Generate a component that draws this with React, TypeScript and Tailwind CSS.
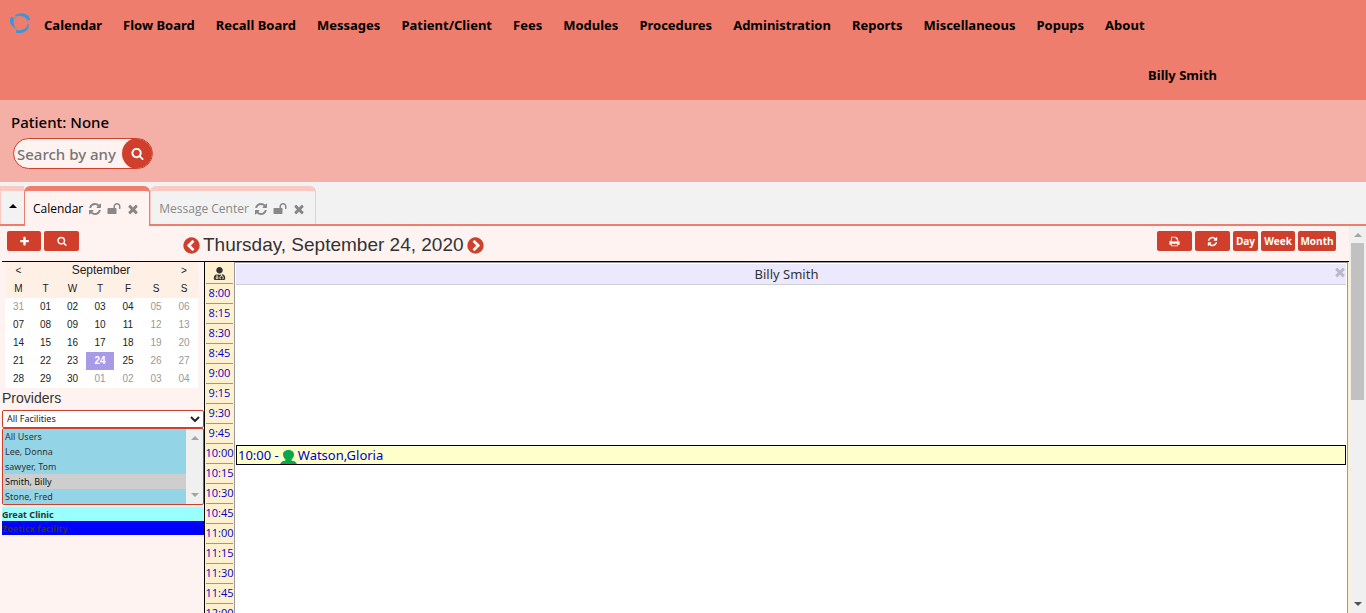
import React from "react";
import { FaUserMd } from "react-icons/fa";

type IconProps = { d: string; className: string };

function Icon({ d, className }: IconProps) {
  return (
    <svg viewBox="0 0 1792 1792" fill="currentColor" aria-hidden="true" className={className}>
      <path d={d} />
    </svg>
  );
}

const REFRESH =
  "M1639 1056q0 5-1 7-64 268-268 434.500t-478 166.500q-146 0-282.500-55t-243.500-157l-129 129q-19 19-45 19t-45-19-19-45v-448q0-26 19-45t45-19h448q26 0 45 19t19 45-19 45l-137 137q71 66 161 102t187 36q134 0 250-65t186-179q11-17 53-117 8-23 30-23h192q13 0 22.500 9.500t9.500 22.500zm25-800v448q0 26-19 45t-45 19h-448q-26 0-45-19t-19-45 19-45l138-138q-148-137-349-137-134 0-250 65t-186 179q-11 17-53 117-8 23-30 23h-199q-13 0-22.500-9.500t-9.500-22.500v-7q65-268 270-434.500t480-166.500q146 0 284 55.500t245 156.500l130-129q19-19 45-19t45 19 19 45z";
const SEARCH =
  "M1216 832q0-185-131.500-316.500t-316.500-131.500-316.500 131.500-131.500 316.500 131.500 316.500 316.500 131.500 316.500-131.500 131.500-316.500zm512 832q0 52-38 90t-90 38q-54 0-90-38l-343-342q-179 124-399 124-143 0-273.500-55.500t-225-150-150-225-55.500-273.500 55.500-273.500 150-225 225-150 273.500-55.500 273.500 55.500 225 150 150 225 55.500 273.500q0 220-124 399l343 343q37 37 37 90z";
const TIMES =
  "M1490 1322q0 40-28 68l-136 136q-28 28-68 28t-68-28l-294-294-294 294q-28 28-68 28t-68-28l-136-136q-28-28-28-68t28-68l294-294-294-294q-28-28-28-68t28-68l136-136q28-28 68-28t68 28l294 294 294-294q28-28 68-28t68 28l136 136q28 28 28 68t-28 68l-294 294 294 294q28 28 28 68z";
const UNLOCK =
  "M1728 576v256q0 26-19 45t-45 19h-64q-26 0-45-19t-19-45v-256q0-106-75-181t-181-75-181 75-75 181v192h96q40 0 68 28t28 68v576q0 40-28 68t-68 28h-960q-40 0-68-28t-28-68v-576q0-40 28-68t68-28h672v-192q0-185 131.500-316.500t316.500-131.500 316.500 131.500 131.500 316.500z";
const CHEVRON_LEFT =
  "M1037 1395l102-102q19-19 19-45t-19-45l-307-307 307-307q19-19 19-45t-19-45l-102-102q-19-19-45-19t-45 19l-454 454q-19 19-19 45t19 45l454 454q19 19 45 19t45-19zm627-499q0 209-103 385.500t-279.500 279.500-385.500 103-385.500-103-279.500-279.500-103-385.500 103-385.500 279.500-279.500 385.500-103 385.500 103 279.500 279.500 103 385.500z";
const PLUS =
  "M1600 736v192q0 40-28 68t-68 28h-416v416q0 40-28 68t-68 28h-192q-40 0-68-28t-28-68v-416h-416q-40 0-68-28t-28-68v-192q0-40 28-68t68-28h416v-416q0-40 28-68t68-28h192q40 0 68 28t28 68v416h416q40 0 68 28t28 68z";
const PRINT =
  "M448 1536h896v-256h-896v256zm0-640h896v-384h-160q-40 0-68-28t-28-68v-160h-640v640zm1152 64q0-26-19-45t-45-19-45 19-19 45 19 45 45 19 45-19 19-45zm128 0v416q0 13-9.500 22.500t-22.500 9.500h-224v160q0 40-28 68t-68 28h-960q-40 0-68-28t-28-68v-160h-224q-13 0-22.500-9.500t-9.500-22.500v-416q0-79 56.500-135.500t135.500-56.500h64v-544q0-40 28-68t68-28h672q40 0 88 20t76 48l152 152q28 28 48 76t20 88v256h64q79 0 135.500 56.500t56.500 135.500z";

const MENU = [
  "Calendar", "Flow Board", "Recall Board", "Messages", "Patient/Client", "Fees", "Modules",
  "Procedures", "Administration", "Reports", "Miscellaneous", "Popups", "About",
];

const WEEKS = [
  ["31", "01", "02", "03", "04", "05", "06"],
  ["07", "08", "09", "10", "11", "12", "13"],
  ["14", "15", "16", "17", "18", "19", "20"],
  ["21", "22", "23", "24", "25", "26", "27"],
  ["28", "29", "30", "01", "02", "03", "04"],
];

const TIMES_OF_DAY = [
  "8:00", "8:15", "8:30", "8:45", "9:00", "9:15", "9:30", "9:45", "10:00",
  "10:15", "10:30", "10:45", "11:00", "11:15", "11:30", "11:45", "12:00",
];

function Logo() {
  return (
    <svg viewBox="0 0 20 20" fill="#3498db" aria-hidden="true" className="size-5">
      <circle cx="10.300" cy="10" r="7.600" fill="none" stroke="#8a93b0" strokeWidth="1" />
      <path d="M4 3.200Q9-1.400 16 1.200Q20 3 20.200 7.400L17.400 6.800Q15.500 3.800 12 3Q8 2.200 4 3.200Z" />
      <path d="M.8 4.400Q4.200 3.400 3.700 5.400Q2.400 10 5.800 15.400Q1 13.200 .1 9Q-.4 6.500 .8 4.400Z" />
      <path d="M6 17Q9 17.800 12 17Q16.500 15.400 18.700 11Q20 15 15.500 18.200Q11 21 6 19.800Z" />
    </svg>
  );
}

function Header() {
  return (
    <header className="shrink-0 bg-[#ee7d6d] font-['Noto_Sans',sans-serif] text-[13px] leading-5 font-bold text-black">
      <nav className="flex h-[50px] items-center pl-2.5">
        <a href="#home" aria-label="Home" className="-mt-1 mr-3.5">
          <Logo />
        </a>
        <div className="flex gap-[21px]">
          {MENU.map((m) => (
            <a key={m} href="#menu" className="whitespace-nowrap">{m}</a>
          ))}
        </div>
      </nav>
      <div className="flex h-[50px] items-center justify-end pr-[149px]">
        <a href="#user">Billy Smith</a>
      </div>
    </header>
  );
}

function PatientBar() {
  return (
    <section className="flex h-[82px] shrink-0 flex-col gap-1.5 bg-[#f4b0a7] pt-3 pl-[11px] font-['Noto_Sans',sans-serif] text-[15px] font-medium">
      <label htmlFor="any-search" className="leading-5 text-black">
        Patient: None
      </label>
      <div className="ml-0.5 flex h-[31px] w-[140px] overflow-hidden rounded-full border border-[#d03f2b] bg-[#fff3f1]">
        <input
          id="any-search"
          placeholder="Search by any demographics"
          className="w-[105px] bg-transparent pt-px pl-[3px] text-black outline-none placeholder:text-[#757575]"
        />
        <button aria-label="Search" className="-my-px -mr-px ml-auto flex w-[31px] shrink-0 items-center justify-center rounded-full bg-[#d03f2b] text-white">
          <Icon d={SEARCH} className="size-[13px]" />
        </button>
      </div>
    </section>
  );
}

function Tab({ title, active }: { title: string; active: boolean }) {
  const look = active
    ? "-mb-0.5 border-[#ee7d6d] bg-[#fef3f0] pt-0.5 pb-0.5 text-black"
    : "border-[#f9c9c2] pt-0.5 text-[#888]";
  return (
    <div className={"flex items-center gap-[5px] rounded-t-md border border-t-[5px] border-b-0 pr-[9px] pl-2 text-xs " + look}>
      <a href="#tab">{title}</a>
      <div className="flex items-center gap-[5px] text-[#888]">
        <button aria-label={"Refresh " + title}><Icon d={REFRESH} className="size-3.5" /></button>
        <button aria-label={"Unlock " + title}><Icon d={UNLOCK} className="size-3.5" /></button>
        <button aria-label={"Close " + title}><Icon d={TIMES} className="size-3.5" /></button>
      </div>
    </div>
  );
}

function TabBar() {
  return (
    <div className="flex h-11 shrink-0 border-b-2 border-[#ee7d6d] bg-[#f2f2f2] pt-1">
      <button aria-label="Collapse" className="flex w-6 items-center justify-center border-t-[5px] border-l border-[#f9c9c2]">
        <svg viewBox="0 0 8 4" className="mb-1 h-1 w-2" aria-hidden="true"><path d="M0 4L4 0L8 4Z" /></svg>
      </button>
      <Tab title="Calendar" active />
      <Tab title="Message Center" active={false} />
    </div>
  );
}

const RED_BUTTON =
  "flex h-5 items-center justify-center rounded-xs bg-[#d03f2b] text-[10px] font-bold text-white";

function Toolbar() {
  return (
    <div className="flex h-[35px] shrink-0 items-start pt-[5px] pr-[13px] pl-[7px]">
      <div className="flex gap-[3px]">
        <button aria-label="Add" className={RED_BUTTON + " w-[34px]"}><Icon d={PLUS} className="size-[11px]" /></button>
        <button aria-label="Search appointments" className={RED_BUTTON + " w-[35px]"}><Icon d={SEARCH} className="size-2.5" /></button>
      </div>
      <div className="ml-[103px] flex h-7 items-center gap-0.5 text-[19px] text-[#333]">
        <button aria-label="Previous day" className="text-[#d03f2b]"><Icon d={CHEVRON_LEFT} className="size-[19px]" /></button>
        <h1 className="font-['Liberation_Sans',sans-serif]">Thursday, September 24, 2020</h1>
        <button aria-label="Next day" className="text-[#d03f2b]"><Icon d={CHEVRON_LEFT} className="size-[19px] -scale-x-100" /></button>
      </div>
      <div className="ml-auto flex gap-[3px]">
        <button aria-label="Print" className={RED_BUTTON + " w-[35px]"}><Icon d={PRINT} className="size-[11px]" /></button>
        <button aria-label="Refresh" className={RED_BUTTON + " w-[35px]"}><Icon d={REFRESH} className="size-[11px]" /></button>
        <button className={RED_BUTTON + " w-[25px]"}>Day</button>
        <button className={RED_BUTTON + " w-[34px]"}>Week</button>
        <button className={RED_BUTTON + " w-[38px]"}>Month</button>
      </div>
    </div>
  );
}

function MiniCalendar() {
  return (
    <table className="ml-[3px] w-[193px] table-fixed border-collapse text-center text-[10px] leading-[18px] text-[#222]">
      <colgroup>
        <col span={3} className="w-[27px]" />
        <col span={4} className="w-[28px]" />
      </colgroup>
      <thead className="bg-[#fff0e6]">
        <tr className="h-[18px]">
          <th className="p-0 font-normal"><button aria-label="Previous month">&lt;</button></th>
          <th colSpan={5} className="p-0 align-top text-xs leading-4 font-normal">September</th>
          <th className="p-0 font-normal"><button aria-label="Next month">&gt;</button></th>
        </tr>
        <tr className="h-[18px]">
          {["M", "T", "W", "T", "F", "S", "S"].map((d, i) => (
            <th key={i} className="p-0 font-normal">{d}</th>
          ))}
        </tr>
      </thead>
      <tbody className="bg-white">
        {WEEKS.map((week, w) => (
          <tr key={w} className="h-[18px]">
            {week.map((day, d) => {
              const outside = (w === 0 && d === 0) || (w === 4 && d > 2) || d > 4;
              const tone = day === "24" ? "bg-[#a79ae6] font-bold text-white" : outside ? "text-[#999]" : "";
              return <td key={d} className={"p-0 " + tone}>{day}</td>;
            })}
          </tr>
        ))}
      </tbody>
    </table>
  );
}

function Sidebar() {
  return (
    <aside className="w-[202px] shrink-0 font-['Liberation_Sans',sans-serif] text-[#333]">
      <MiniCalendar />
      <label htmlFor="providers" className="block h-[22px] text-sm leading-5">Providers</label>
      <div className="font-['Noto_Sans',sans-serif] text-[9px]">
        <div className="grid">
          <select aria-label="Facility" className="col-start-1 row-start-1 h-[18px] w-full appearance-none rounded-xs border border-[#d03f2b] bg-white pl-1 text-[9px] text-[#222]">
            <option>All Facilities</option>
          </select>
          <svg viewBox="0 0 10 6" aria-hidden="true" className="pointer-events-none col-start-1 row-start-1 mr-1 h-1.5 w-2.5 self-center justify-self-end" fill="none" stroke="#222" strokeWidth="2">
            <path d="M1 1L5 5L9 1" />
          </svg>
        </div>
        <div className="flex h-[77px] overflow-hidden rounded-xs border border-[#d03f2b] bg-[#f0f0f0]">
          <select id="providers" multiple size={5} defaultValue={["Smith, Billy"]} className="h-[75px] flex-1 overflow-hidden bg-[#93d5e6] text-[9px] text-[#333] outline-none">
            {["All Users", "Lee, Donna", "sawyer, Tom", "Smith, Billy", "Stone, Fred"].map((p) => (
              <option key={p} className="h-[15px] min-h-0 px-0.5 pt-px pb-0 leading-[14px]">{p}</option>
            ))}
          </select>
          <div className="flex w-[17px] flex-col items-center justify-between py-[7px]" aria-hidden="true">
            <svg viewBox="0 0 8 4" className="h-1 w-2" fill="#a3a3a3"><path d="M0 4L4 0L8 4Z" /></svg>
            <svg viewBox="0 0 8 4" className="h-1 w-2" fill="#a3a3a3"><path d="M0 0L4 4L8 0Z" /></svg>
          </div>
        </div>
        <div className="mt-0.5 leading-[13px] font-bold">
          <div className="bg-[#99ffff] pt-px">Great Clinic</div>
          <div className="bg-[#0000ff] pt-px">Zoeticx facility</div>
        </div>
      </div>
    </aside>
  );
}

function Schedule() {
  return (
    <section className="flex min-w-0 flex-1 border-l border-black bg-[#fff1cf]">
      <div className="w-[29px] shrink-0 px-px text-center text-[11px] text-[#0000cc]">
        <div className="flex h-[22px] items-center justify-center border-b border-[#999] pt-0.5 text-[#333]">
          <FaUserMd className="size-[13px]" aria-hidden="true" />
        </div>
        {TIMES_OF_DAY.map((t) => (
          <a key={t} href="#slot" className="flex h-5 items-center justify-center border-b border-[#999]">{t}</a>
        ))}
      </div>
      <div className="mr-px flex min-w-0 flex-1 flex-col border-x border-t border-[#999] bg-white font-['Noto_Sans',sans-serif]">
        <div className="mx-px mt-px flex h-[21px] items-center border-b border-[#d0d0d0] bg-[#ece9ff]">
          <h2 className="flex-1 pt-px pl-1 text-center text-[13px] text-[#333]">Billy Smith</h2>
          <button aria-label="Close provider" className="-mt-1 -mr-px text-[#bbb8cc]"><Icon d={TIMES} className="size-3.5" /></button>
        </div>
        <a href="#appointment" className="mx-px mt-40 flex h-5 items-center gap-px border border-black bg-[#ffffcc] pt-px pl-px text-[13px] text-[#0000cc]">
          <span className="whitespace-pre">10:00 -</span>
          <svg viewBox="0 0 17 14" className="h-3.5 w-[17px] self-end" fill="#0aa648" aria-hidden="true">
            <path d="M3 4.500C3 1.500 5.500 0 8.500 0S14 1.500 14 4.500C14 7 12.500 8.500 11.500 9.500V10.500L15 11.500L17 14H0L2 11.500L5.500 10.500V9.500C4.500 8.500 3 7 3 4.500Z" />
          </svg>
          <span>Watson,Gloria</span>
        </a>
      </div>
    </section>
  );
}

function PageScrollbar() {
  return (
    <div className="flex w-[17px] shrink-0 flex-col items-center bg-[#f0f0f0]" aria-hidden="true">
      <div className="flex h-[17px] shrink-0 items-center">
        <svg viewBox="0 0 8 4" className="h-1 w-2" fill="#a3a3a3"><path d="M0 4L4 0L8 4Z" /></svg>
      </div>
      <div className="h-[157px] w-[13px] bg-[#c1c1c1]" />
      <svg viewBox="0 0 8 4" className="mt-auto mb-[7px] h-1 w-2" fill="#505050"><path d="M0 0L4 4L8 0Z" /></svg>
    </div>
  );
}

export default function App() {
  return (
    <div className="flex h-screen flex-col overflow-hidden bg-[#fef3f0] font-['Open_Sans',sans-serif]">
      <Header />
      <PatientBar />
      <TabBar />
      <main className="flex min-h-0 flex-1">
        <div className="flex min-w-0 flex-1 flex-col">
          <Toolbar />
          <div className="ml-0.5 flex min-h-0 flex-1 overflow-hidden border-t border-black">
            <Sidebar />
            <Schedule />
          </div>
        </div>
        <PageScrollbar />
      </main>
    </div>
  );
}
